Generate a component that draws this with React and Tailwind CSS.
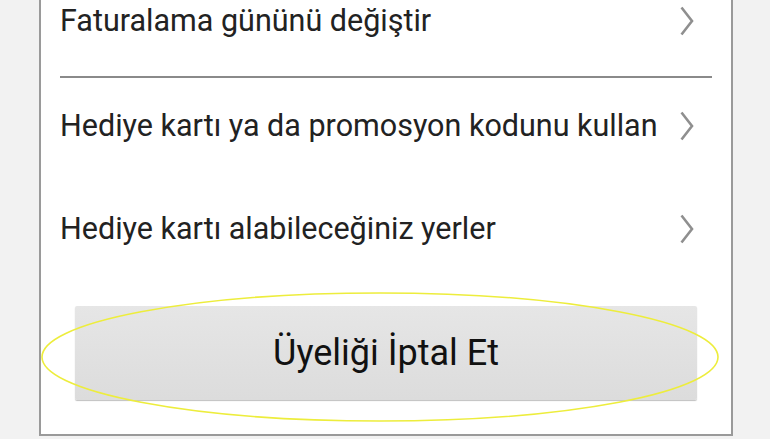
import React from "react";

function Chevron() {
  return (
    <svg width="14" height="30" viewBox="0 0 14 30" className="shrink-0">
      <polyline points="1.5,1.5 12,15 1.5,28.5" fill="none" stroke="#8f8f8f" strokeWidth="2.6" strokeLinecap="butt" strokeLinejoin="miter" />
    </svg>
  );
}

function Row({ text, h }) {
  return (
    <div className={`flex items-center justify-between pl-[19px] pr-[37px] ${h}`}>
      <span className="text-[30.5px] leading-none text-[#222]">{text}</span>
      <Chevron />
    </div>
  );
}

export default function App() {
  return (
    <div className="relative h-[439px] w-[770px] overflow-hidden bg-[#f2f2f2]" style={{ fontFamily: "Roboto, 'Noto Sans', sans-serif" }}>
      <div className="ml-[39px] w-[694px] border-x-2 border-b-2 border-[#9a9a9a] bg-white pb-[34px]">
        <Row text="Faturalama gününü değiştir" h="h-[42px]" />
        <div className="mx-[19px] mt-[34px] h-[2px] bg-[#8a8a8a]" />
        <Row text="Hediye kartı ya da promosyon kodunu kullan" h="h-[96px]" />
        <Row text="Hediye kartı alabileceğiniz yerler" h="h-[110px]" />
        <div className="mx-[34px] mt-[22px] flex h-[94px] items-center justify-center rounded-[2px] bg-gradient-to-b from-[#e6e6e6] to-[#dcdcdc] shadow-[0_1px_1px_rgba(0,0,0,0.25)]">
          <span className="text-[36px] leading-none text-[#111]">Üyeliği İptal Et</span>
        </div>
      </div>
      <svg className="pointer-events-none absolute left-0 top-0" width="770" height="439">
        <ellipse cx="380" cy="357" rx="338" ry="64" fill="none" stroke="#eded3c" strokeWidth="1.6" />
      </svg>
    </div>
  );
}
